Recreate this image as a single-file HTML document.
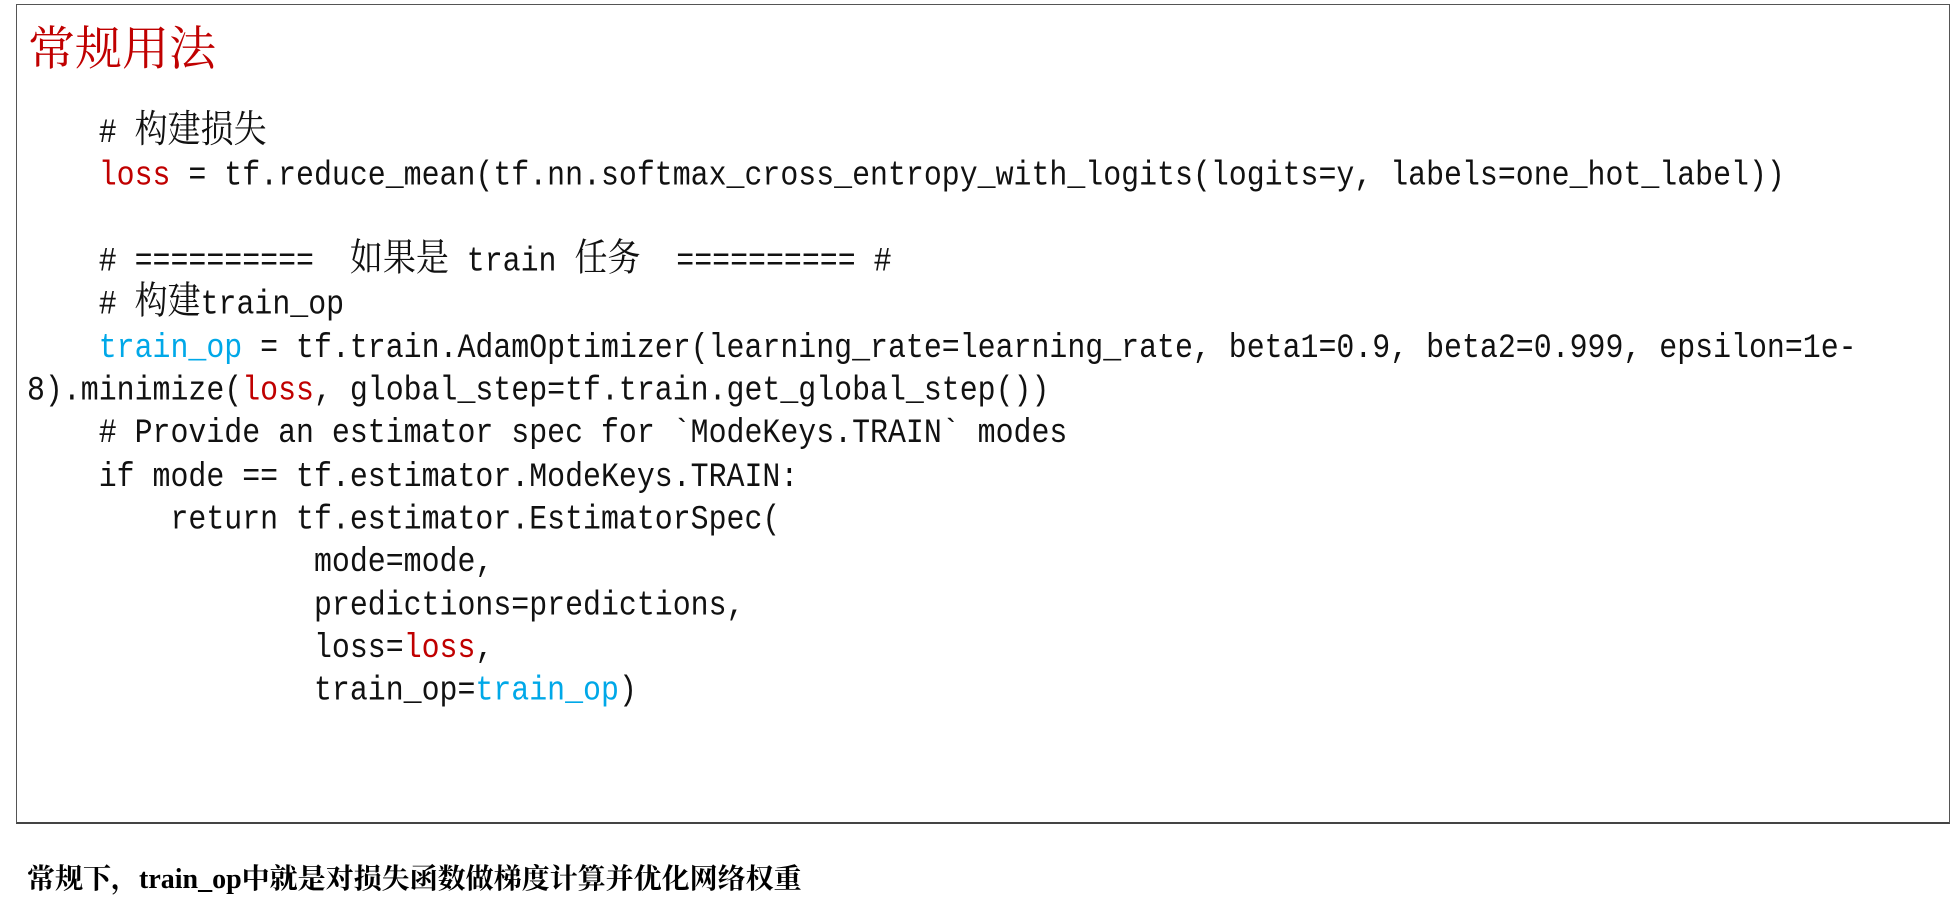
<!DOCTYPE html>
<html><head><meta charset="utf-8"><style>
html,body{margin:0;padding:0;background:#fff;width:1952px;height:907px;overflow:hidden;position:relative}
.box{position:absolute;left:16px;top:4px;width:1932px;height:817px;border:1px solid #555;border-bottom:2px solid #444;}
.title{position:absolute;left:28px;top:22px;font-family:"Liberation Serif","Noto Serif CJK SC",serif;font-size:47px;line-height:56px;color:#c00000}
pre{position:absolute;left:27px;top:112px;margin:0;font-family:"Liberation Mono","Noto Serif CJK SC",monospace;font-size:29.9px;line-height:37.33px;color:#111;transform:scaleY(1.15);transform-origin:0 0}
.c{font-family:"Noto Serif CJK SC",serif;font-size:33px;line-height:0}
.r{color:#c00000}.b{color:#00a8e8}
.foot{position:absolute;left:27px;top:862px;font-family:"Liberation Serif","Noto Serif CJK SC",serif;font-weight:bold;font-size:28px;line-height:36px;color:#000}
</style></head><body>
<div class="box"></div>
<div class="title">常规用法</div>
<pre>    # <span class="c">构建损失</span>
    <span class="r">loss</span> = tf.reduce_mean(tf.nn.softmax_cross_entropy_with_logits(logits=y, labels=one_hot_label))

    # ==========  <span class="c">如果是</span> train <span class="c">任务</span>  ========== #
    # <span class="c">构建</span>train_op
    <span class="b">train_op</span> = tf.train.AdamOptimizer(learning_rate=learning_rate, beta1=0.9, beta2=0.999, epsilon=1e-
8).minimize(<span class="r">loss</span>, global_step=tf.train.get_global_step())
    # Provide an estimator spec for `ModeKeys.TRAIN` modes
    if mode == tf.estimator.ModeKeys.TRAIN:
        return tf.estimator.EstimatorSpec(
                mode=mode,
                predictions=predictions,
                loss=<span class="r">loss</span>,
                train_op=<span class="b">train_op</span>)</pre>
<div class="foot">常规下，train_op中就是对损失函数做梯度计算并优化网络权重</div>
</body></html>
